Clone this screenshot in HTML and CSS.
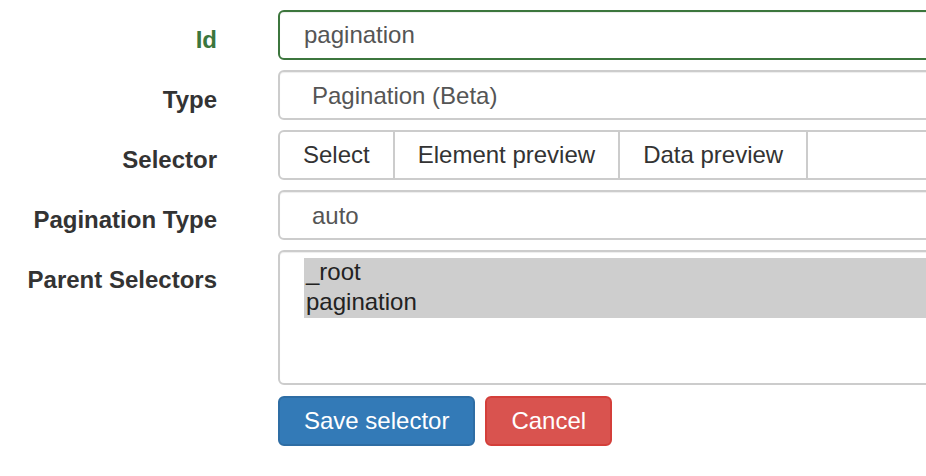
FILE: index.html
```html
<!DOCTYPE html>
<html lang="en">
<head>
  <meta charset="UTF-8">
  <title>Edit selector</title>
  <link rel="stylesheet" href="styles.css">
</head>
<body>

  <form id="editSelector" class="form-horizontal">
    <div class="form-group has-success">
      <label class="control-label" for="selectorId">Id</label>
      <input type="text" class="form-control" id="selectorId" value="pagination">
    </div>

    <div class="form-group">
      <label class="control-label" for="selectorType">Type</label>
      <select class="form-control" id="selectorType">
        <option>Pagination (Beta)</option>
      </select>
    </div>

    <div class="form-group">
      <label class="control-label">Selector</label>
      <div class="btn-group">
        <button type="button" class="btn btn-default">Select</button>
        <button type="button" class="btn btn-default">Element preview</button>
        <button type="button" class="btn btn-default">Data preview</button>
        <span class="btn btn-default btn-fill"></span>
      </div>
    </div>

    <div class="form-group">
      <label class="control-label" for="paginationType">Pagination Type</label>
      <select class="form-control" id="paginationType">
        <option>auto</option>
      </select>
    </div>

    <div class="form-group">
      <label class="control-label">Parent Selectors</label>
      <div class="form-control listbox" id="parentSelectors">
        <div class="option selected">_root</div>
        <div class="option selected">pagination</div>
      </div>
    </div>

    <div class="form-actions">
      <button type="button" class="btn btn-primary">Save selector</button>
      <button type="button" class="btn btn-danger">Cancel</button>
    </div>
  </form>

</body>
</html>
```

FILE: styles.css
```css
html, body {
  margin: 0;
  overflow: hidden;
}

body {
  background: #fff;
  color: #333;
  font-family: "Liberation Sans", Arial, sans-serif;
  font-size: 24px;
}

.form-horizontal {
  padding-top: 10px;
  width: 1000px;
}

.form-group {
  display: grid;
  grid-template-columns: 217px 700px;
  column-gap: 61px;
  margin-bottom: 10px;
}

.control-label {
  text-align: right;
  font-weight: bold;
  line-height: 34px;
  padding-top: 13px;
}

.form-control {
  box-sizing: border-box;
  height: 50px;
  padding: 0 24px;
  border: 2px solid #ccc;
  border-radius: 6px;
  background: #fff;
  color: #555;
  font: inherit;
  box-shadow: inset 0 1px 1px rgba(0, 0, 0, .075);
  outline: none;
}

select.form-control {
  -webkit-appearance: none;
  appearance: none;
  padding-left: 32px;
}

.has-success .control-label {
  color: #3c763d;
}

.has-success .form-control {
  border-color: #3c763d;
}

/* button group for the selector row */
.btn-group {
  display: flex;
}

.btn {
  box-sizing: border-box;
  height: 50px;
  padding: 0 23px;
  border: 2px solid transparent;
  border-radius: 6px;
  font: inherit;
  white-space: nowrap;
  cursor: pointer;
}

.btn-default {
  background: #fff;
  color: #333;
  border-color: #ccc;
}

.btn-group .btn {
  border-radius: 0;
}

.btn-group .btn + .btn {
  margin-left: -2px;
}

.btn-group .btn:first-child {
  border-radius: 6px 0 0 6px;
}

.btn-fill {
  flex: 1;
}

/* multi select list */
.listbox {
  height: 135px;
  padding: 6px 0 0 24px;
}

.option {
  line-height: 27px;
  padding: 0 2px 3px;
  color: #222;
}

.option.selected {
  background: #cecece;
}

.form-actions {
  display: flex;
  gap: 10px;
  margin-top: 11px;
  margin-left: 278px;
}

.btn-primary {
  background: #337ab7;
  border-color: #2e6da4;
  color: #fff;
  padding: 0 24px;
}

.btn-danger {
  background: #d9534f;
  border-color: #d43f3a;
  color: #fff;
  padding: 0 24px;
}
```
